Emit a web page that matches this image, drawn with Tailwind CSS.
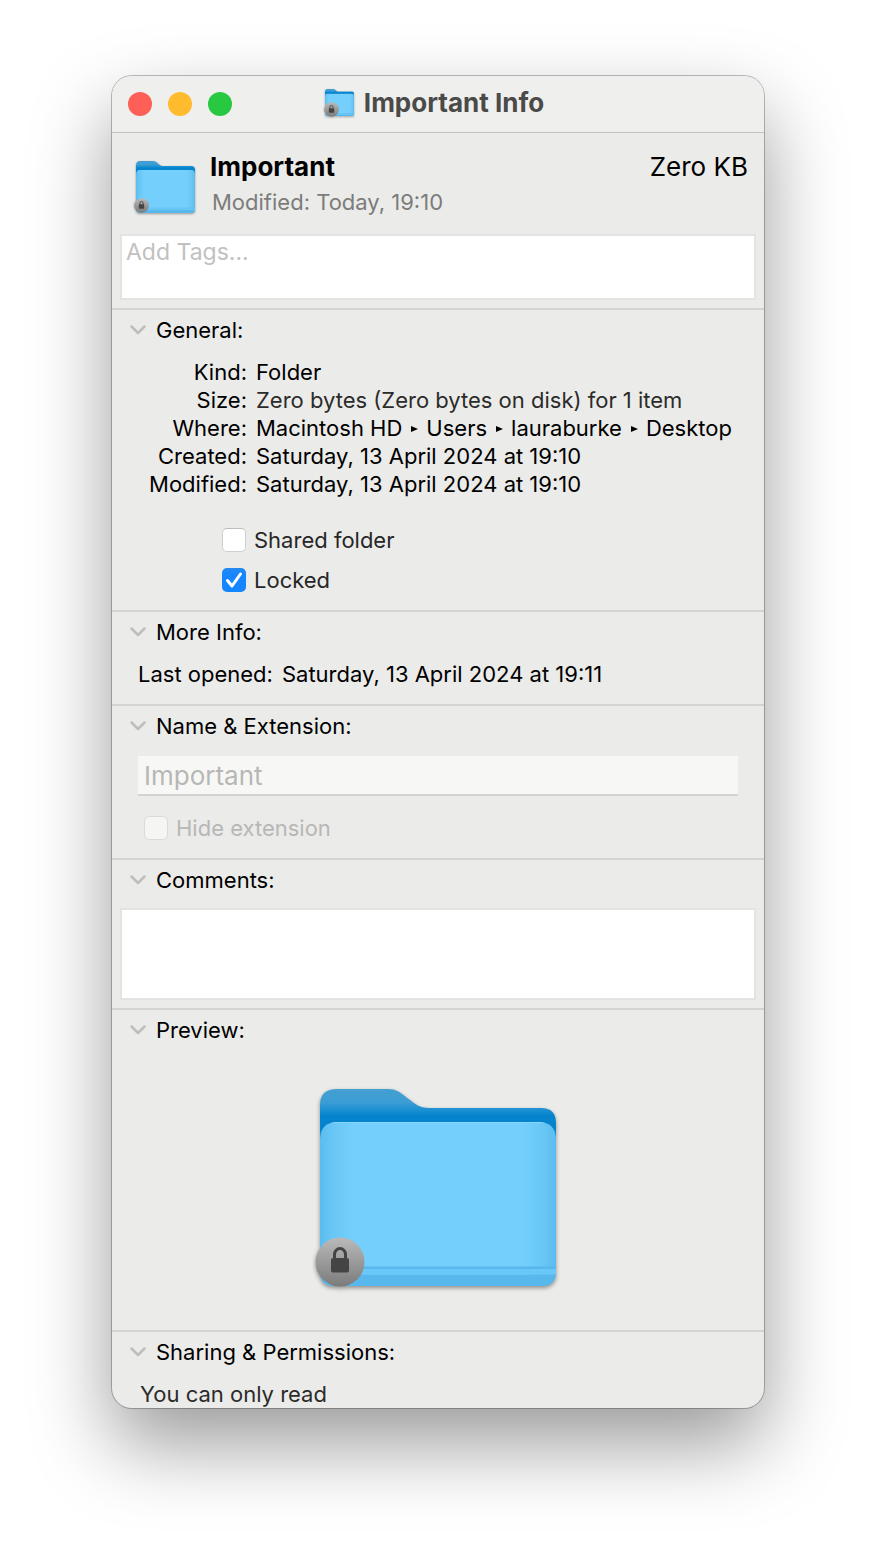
<!DOCTYPE html>
<html lang="en">
<head>
  <meta charset="UTF-8" />
  <meta name="viewport" content="width=device-width, initial-scale=1.0"/>
  <title>Important Info</title>
  <script src="https://cdn.jsdelivr.net/npm/@tailwindcss/browser@4"></script>
</head>
<body class="bg-white px-28 pt-19 pb-36 font-['Inter','Liberation_Sans',sans-serif] text-[22px] leading-7 text-black">

  <!-- Shared icons -->
  <svg class="absolute size-0" aria-hidden="true">
    <defs>
      <linearGradient id="back" x1="0" y1="0" x2="0" y2="1">
        <stop offset="0" stop-color="#449fd2"/>
        <stop offset="0.19" stop-color="#3c9dd4"/>
        <stop offset="0.3" stop-color="#1b90d2"/>
        <stop offset="0.38" stop-color="#0584cd"/>
        <stop offset="1" stop-color="#0584cd"/>
      </linearGradient>
      <linearGradient id="sides" x1="0" y1="0" x2="1" y2="0">
        <stop offset="0" stop-color="#5bbcee"/>
        <stop offset="0.05" stop-color="#68c6f5"/>
        <stop offset="0.14" stop-color="#74cffc"/>
        <stop offset="0.86" stop-color="#74cffc"/>
        <stop offset="0.95" stop-color="#68c6f5"/>
        <stop offset="1" stop-color="#5bbcee"/>
      </linearGradient>
      <linearGradient id="disc" x1="0" y1="0" x2="0" y2="1">
        <stop offset="0" stop-color="#bababa"/>
        <stop offset="1" stop-color="#7b7b7b"/>
      </linearGradient>
      <clipPath id="frontClip">
        <path d="M0 49Q1 33 18 33H218Q235 33 236 49V183Q236 197 221 197H15Q0 197 0 183Z"/>
      </clipPath>
      <symbol id="folder" viewBox="0 0 236 197" preserveAspectRatio="none" overflow="visible">
        <path fill="url(#back)" d="M0 16Q0 0 17 0H68C76 0 80 3 86 8L94 14C99 18 104 19 111 19H221Q236 19 236 34V70H0Z"/>
        <g clip-path="url(#frontClip)">
          <path fill="url(#sides)" d="M0 33H236V197H0Z"/>
          <path fill="#8ad8fd" d="M0 33H236V34H0Z"/>
          <path fill="#58b8ec" d="M0 177.500H236V180H0ZM0 185.500H236V197H0Z"/>
          <path fill="#6ac8f8" d="M0 180H236V185.500H0Z"/>
        </g>
      </symbol>
      <symbol id="lock" viewBox="0 0 50 50" overflow="visible">
        <circle cx="25" cy="25" r="24.500" fill="url(#disc)"/>
        <path fill="none" stroke="#444" stroke-width="3" d="M19.500 23V17.500a5.500 6 0 0 1 11 0V23"/>
        <rect x="16" y="21" width="18" height="14.500" rx="2" fill="#444"/>
      </symbol>
      <symbol id="chevron" viewBox="0 0 16 16">
        <path fill="none" stroke="#bebebe" stroke-width="2.500" stroke-linecap="round" stroke-linejoin="round" d="M1.500 4.500 8 11 14.500 4.500"/>
      </symbol>
    </defs>
  </svg>

  <main class="overflow-hidden rounded-[20px] bg-[#ebebe9] shadow-[0_0_0_1px_rgba(0,0,0,0.25),0_36px_80px_rgba(0,0,0,0.4)]">

    <!-- Title bar -->
    <header class="grid h-[57px] grid-cols-[1fr_auto_1fr] items-center border-b border-[#c2c2c1] bg-[#efefed] px-4">
      <div class="flex gap-4">
        <button type="button" aria-label="Close" class="size-6 rounded-full bg-[#fe5f57]"></button>
        <button type="button" aria-label="Minimise" class="size-6 rounded-full bg-[#febb2e]"></button>
        <button type="button" aria-label="Zoom" class="size-6 rounded-full bg-[#28c840]"></button>
      </div>
      <div class="flex items-center gap-2 pr-2 pb-0.5">
        <svg class="h-8 w-8 drop-shadow-[0_1px_1px_rgba(0,0,0,0.3)]" viewBox="0 0 32 32" aria-hidden="true">
          <use href="#folder" x="1" y="2" width="29" height="27"/>
          <use href="#lock" x="0" y="15" width="15" height="15"/>
        </svg>
        <h1 class="text-[26px] font-bold text-[#4a4a49]">Important Info</h1>
      </div>
    </header>

    <!-- Summary -->
    <div class="border-b-2 border-[#d3d3d2] px-2 pb-2">
      <div class="flex gap-3 pt-5 pr-2 pl-3.5">
        <svg class="mt-1 h-16 w-16 drop-shadow-[0_1px_1px_rgba(0,0,0,0.35)]" viewBox="0 0 64 64" aria-hidden="true">
          <use href="#folder" x="2" y="4" width="59" height="52"/>
          <use href="#lock" x="0" y="41" width="15" height="15"/>
        </svg>
        <div class="flex-1">
          <h2 class="text-[26px] leading-7 font-bold">Important</h2>
          <p class="pt-[7px] pl-0.5 text-[#7c7c7b]">Modified: Today, 19:10</p>
        </div>
        <p class="text-[26px] leading-7">Zero KB</p>
      </div>
      <textarea aria-label="Tags" placeholder="Add Tags..." class="mt-[13px] block h-[66px] w-full resize-none border-2 border-[#e3e3e2] bg-white px-1 text-[23px] leading-8 placeholder:text-[#c1c1c1]"></textarea>
    </div>

    <details open class="border-b-2 border-[#d3d3d2] pb-4">
      <summary class="flex list-none items-center gap-2.5 px-4.5 pt-1.5">
        <svg class="size-4" aria-hidden="true"><use href="#chevron"/></svg>General:
      </summary>
      <dl class="grid grid-cols-[135px_1fr] gap-x-[9px] pt-3.5 whitespace-nowrap">
        <dt class="text-right">Kind:</dt>
        <dd>Folder</dd>
        <dt class="text-right">Size:</dt>
        <dd class="text-[#2b2b2b]">Zero bytes (Zero bytes on disk) for 1 item</dd>
        <dt class="text-right">Where:</dt>
        <dd class="flex items-center gap-2">
          Macintosh HD
          <svg class="h-2 w-2" viewBox="0 0 8 8" aria-hidden="true"><path d="M1 2 8 5 1 8Z"/></svg>
          Users
          <svg class="h-2 w-2" viewBox="0 0 8 8" aria-hidden="true"><path d="M1 2 8 5 1 8Z"/></svg>
          lauraburke
          <svg class="h-2 w-2" viewBox="0 0 8 8" aria-hidden="true"><path d="M1 2 8 5 1 8Z"/></svg>
          Desktop
        </dd>
        <dt class="text-right">Created:</dt>
        <dd>Saturday, 13 April 2024 at 19:10</dd>
        <dt class="text-right">Modified:</dt>
        <dd>Saturday, 13 April 2024 at 19:10</dd>
      </dl>
      <div class="flex flex-col items-start gap-3 pt-7 pl-[110px] text-[#272727]">
        <label class="flex items-center gap-2">
          <input type="checkbox" class="size-6 appearance-none rounded-[5px] border border-[#cfcfce] border-t-[#bdbdbc] bg-white" />
          Shared folder
        </label>
        <label class="flex items-center gap-2">
          <span class="grid size-6">
            <input type="checkbox" checked class="col-start-1 row-start-1 size-6 appearance-none rounded-[5px] bg-linear-to-b from-[#2389ee] to-[#1586ff] to-30%" />
            <svg class="pointer-events-none col-start-1 row-start-1 size-6" viewBox="0 0 24 24" aria-hidden="true">
              <path fill="none" stroke="#fff" stroke-width="3" stroke-linecap="round" stroke-linejoin="round" d="M5.500 12.500 10 18 18.500 6"/>
            </svg>
          </span>
          Locked
        </label>
      </div>
    </details>

    <details open class="border-b-2 border-[#d3d3d2] pb-4">
      <summary class="flex list-none items-center gap-2.5 px-4.5 pt-1.5">
        <svg class="size-4" aria-hidden="true"><use href="#chevron"/></svg>More Info:
      </summary>
      <dl class="flex gap-[9px] pt-3.5 pl-[26px]">
        <dt>Last opened:</dt>
        <dd>Saturday, 13 April 2024 at 19:11</dd>
      </dl>
    </details>

    <details open class="border-b-2 border-[#d3d3d2] pb-4">
      <summary class="flex list-none items-center gap-2.5 px-4.5 pt-1.5">
        <svg class="size-4" aria-hidden="true"><use href="#chevron"/></svg>Name &amp; Extension:
      </summary>
      <div class="px-[26px] pt-4">
        <input type="text" aria-label="Name" value="Important" disabled class="block h-10 w-full border-b-2 border-[#d3d3d2] bg-[#f7f7f5] px-1.5 text-[26px] text-[#b7b7b6]" />
        <label class="flex items-center gap-2 pt-4.5 pl-1.5 text-[#b7b7b6]">
          <input type="checkbox" disabled class="size-6 appearance-none rounded-[5px] border border-[#dadad9] bg-[#f5f5f3]" />
          Hide extension
        </label>
      </div>
    </details>

    <details open class="border-b-2 border-[#d3d3d2] px-2 pb-2">
      <summary class="flex list-none items-center gap-2.5 px-2.5 pt-1.5">
        <svg class="size-4" aria-hidden="true"><use href="#chevron"/></svg>Comments:
      </summary>
      <textarea aria-label="Comments" class="mt-3.5 block h-[92px] w-full resize-none border-2 border-[#e3e3e2] bg-white px-1"></textarea>
    </details>

    <details open class="border-b-2 border-[#d3d3d2] pb-8">
      <summary class="flex list-none items-center gap-2.5 px-4.5 pt-1.5">
        <svg class="size-4" aria-hidden="true"><use href="#chevron"/></svg>Preview:
      </summary>
      <svg class="mx-auto mt-9 h-[218px] w-64 drop-shadow-[0_2px_2px_rgba(0,0,0,0.4)]" viewBox="0 0 256 218" role="img" aria-label="Locked folder">
        <use href="#folder" x="10" y="9" width="236" height="197"/>
        <use href="#lock" x="5" y="157" width="50" height="50"/>
      </svg>
    </details>

    <details open>
      <summary class="flex list-none items-center gap-2.5 px-4.5 pt-1.5">
        <svg class="size-4" aria-hidden="true"><use href="#chevron"/></svg>Sharing &amp; Permissions:
      </summary>
      <p class="pt-3.5 pl-7 text-[#2b2b2b]">You can only read</p>
    </details>

  </main>

</body>
</html>
